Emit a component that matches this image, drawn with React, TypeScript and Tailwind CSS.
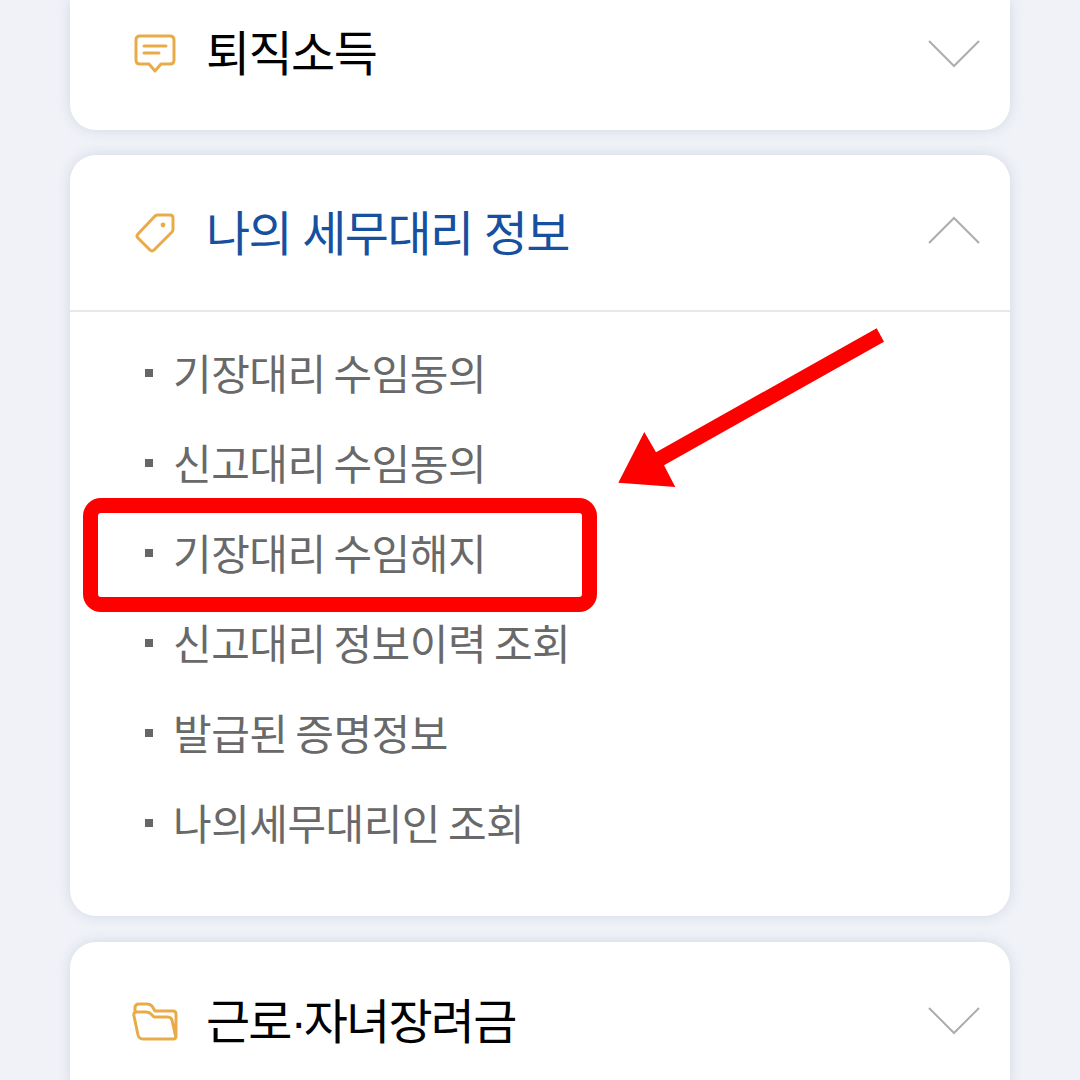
const font = { fontFamily: '"Noto Sans CJK KR", sans-serif' };

function Chevron({ up, className }: { up?: boolean; className?: string }) {
  return (
    <svg width="54" height="30" viewBox="0 0 54 30" fill="none" className={`shrink-0 ${className ?? ""}`}>
      <path d={up ? "M2 28 L27 3 L52 28" : "M2 2 L27 27 L52 2"} stroke="#adadad" strokeWidth="2" />
    </svg>
  );
}

function ChatIcon() {
  return (
    <svg width="42" height="40" viewBox="0 0 42 40" fill="none" stroke="#e9ab48" strokeWidth="3" strokeLinejoin="round" strokeLinecap="round" className="ml-[2px] mt-[3px]">
      <path d="M6 2 H36 Q40 2 40 6 V26 Q40 30 36 30 H27 L21 37 L15 30 H6 Q2 30 2 26 V6 Q2 2 6 2 Z" />
      <path d="M10 12 H32 M10 19 H25" />
    </svg>
  );
}

function TagIcon() {
  return (
    <svg width="40" height="40" viewBox="0 0 40 40" fill="none" stroke="#e9ab48" strokeWidth="3" strokeLinejoin="round" className="ml-[3px]">
      <path d="M3 21 L20 3 Q21 2 23 2 H35 Q38 2 38 5 V16 Q38 18 37 19 L19 37 Q17 39 15 37 L3 25 Q1 23 3 21 Z" />
      <circle cx="28" cy="12" r="2.4" fill="#e9ab48" stroke="none" />
    </svg>
  );
}

function FolderIcon() {
  return (
    <svg width="46" height="40" viewBox="0 0 46 40" fill="none" stroke="#e9ab48" strokeWidth="3" strokeLinejoin="round" className="mt-[2px]">
      <path d="M3 10 V6 Q3 2 7 2 H15 Q18 2 20 4 L23 9 H41 Q44 9 44 12 V34 Q44 37 41 37 H11 Q7 37 6 33 L2 14 Q1 10 5 10 H14 Q17 10 19 12 L22 15 H36 Q39 15 40 18 L44 36" />
    </svg>
  );
}

const items = ["기장대리 수임동의", "신고대리 수임동의", "기장대리 수임해지", "신고대리 정보이력 조회", "발급된 증명정보", "나의세무대리인 조회"];

function Header({ icon, title, color, up, chevron, titleClass }: { icon: React.ReactNode; title: React.ReactNode; color: string; up?: boolean; chevron?: string; titleClass?: string }) {
  return (
    <div className="flex items-center h-full pl-[62px] pr-[29px]">
      <div className="w-[74px] shrink-0 flex items-center">{icon}</div>
      <span className={`flex-1 text-[48px] leading-none tracking-[-1.6px] [word-spacing:2px] whitespace-nowrap ${titleClass ?? "mb-[4px]"}`} style={{ color }}>{title}</span>
      <Chevron up={up} className={chevron} />
    </div>
  );
}

export default function App() {
  return (
    <div className="relative w-[1080px] h-[1080px] overflow-hidden bg-[#f0f2f8] px-[70px]" style={font}>
      <div className="h-[130px] bg-white rounded-b-[26px] shadow-[0_0_14px_rgba(40,50,90,0.13)] pb-[26px]">
        <Header icon={<ChatIcon />} title="퇴직소득" color="#000000" chevron="mt-[4px]" />
      </div>
      <div className="mt-[25px] h-[761px] bg-white rounded-[26px] shadow-[0_0_14px_rgba(40,50,90,0.13)]">
        <div className="h-[157px] border-b-2 border-[#e8e8ec]">
          <Header icon={<TagIcon />} title="나의 세무대리 정보" color="#17509f" up chevron="mb-[6px]" titleClass="mb-[6px]" />
        </div>
        <ul className="pt-[16px] pl-[75px]">
          {items.map((t) => (
            <li key={t} className="h-[90px] flex items-center">
              <span className="w-[8px] h-[8px] bg-[#666666] mr-[20px]" />
              <span className="text-[42px] leading-none tracking-[-0.5px] [word-spacing:-1px] text-[#696969] whitespace-nowrap mb-[3px]">{t}</span>
            </li>
          ))}
        </ul>
      </div>
      <div className="mt-[26px] h-[160px] bg-white rounded-[26px] shadow-[0_0_14px_rgba(40,50,90,0.13)]">
        <div className="h-[158px]">
          <Header
            icon={<FolderIcon />}
            title={<>근로<span className="font-['Liberation_Sans'] tracking-[-3px]">·</span>자녀장려금</>}
            color="#000000"
            titleClass="mb-[2px] tracking-[-1.8px]"
          />
        </div>
      </div>
      <div className="absolute left-[83px] top-[498px] w-[514px] h-[114px] border-[15.5px] border-[#ff0000] rounded-[18px]" />
      <svg className="absolute left-0 top-0" width="1080" height="1080" viewBox="0 0 1080 1080">
        <polygon fill="#ff0000" points="876.7,328.3 884,341.7 664,465.3 675.3,487 618.3,482.7 644.3,432 656,452.3" />
      </svg>
    </div>
  );
}
